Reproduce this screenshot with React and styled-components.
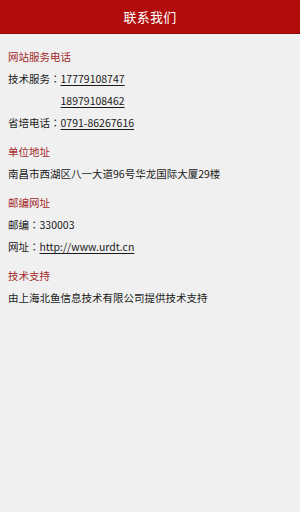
import React from "react"
import styled, { createGlobalStyle } from "styled-components"

const GlobalStyle = createGlobalStyle`
  html, body {
    margin: 0;
    padding: 0;
    background: #f0f0f0;
  }
  body {
    font-family: "Noto Sans CJK SC", Roboto, "Noto Sans", sans-serif;
  }
`

const sections = [
  {
    title: "网站服务电话",
    rows: [
      { label: "技术服务", value: "17779108747", link: true },
      { label: "", value: "18979108462", link: true },
      { label: "省培电话", value: "0791-86267616", link: true },
    ],
  },
  {
    title: "单位地址",
    rows: [{ label: "", value: "南昌市西湖区八一大道96号华龙国际大厦29楼" }],
  },
  {
    title: "邮编网址",
    rows: [
      { label: "邮编", value: "330003" },
      { label: "网址", value: "http://www.urdt.cn", link: true },
    ],
  },
  {
    title: "技术支持",
    rows: [{ label: "", value: "由上海北鱼信息技术有限公司提供技术支持" }],
  },
]

const App = () => (
  <Page>
    <GlobalStyle />
    <Header>联系我们</Header>
    <Content>
      {sections.map((s, i) => (
        <Section key={i}>
          <SectionTitle>{s.title}</SectionTitle>
          {s.rows.map((r, j) => (
            <Row key={j} $indent={!r.label && r.link}>
              {r.label && (
                <span>
                  {r.label}
                  <Colon>：</Colon>
                </span>
              )}
              {r.link ? <Link>{r.value}</Link> : <span>{r.value}</span>}
            </Row>
          ))}
        </Section>
      ))}
    </Content>
  </Page>
)

const Page = styled.div`
  min-height: 512px;
  background: #f0f0f0;
`
const Header = styled.div`
  height: 33px;
  background: #b10d0d;
  border-bottom: 1px solid #8e0a0a;
  color: #fff;
  font-size: 13px;
  display: flex;
  align-items: center;
  justify-content: center;
  letter-spacing: 0.3px;
`
const Content = styled.div`
  padding: 12px 8px 0;
  display: flex;
  flex-direction: column;
  gap: 7px;
`
const Section = styled.div`
  display: flex;
  flex-direction: column;
`
const SectionTitle = styled.div`
  color: #a3282a;
  font-size: 10.5px;
  line-height: 22px;
`
const Row = styled.div`
  color: #1a1a1a;
  font-size: 10.5px;
  line-height: 22px;
  padding-left: ${p => (p.$indent ? "52.5px" : "0")};
  white-space: nowrap;
`
const Colon = styled.span`
  font-family: "Noto Sans CJK TC", sans-serif;
`
const Link = styled.span`
  text-decoration: underline;
  text-underline-offset: 2px;
`

export default App
